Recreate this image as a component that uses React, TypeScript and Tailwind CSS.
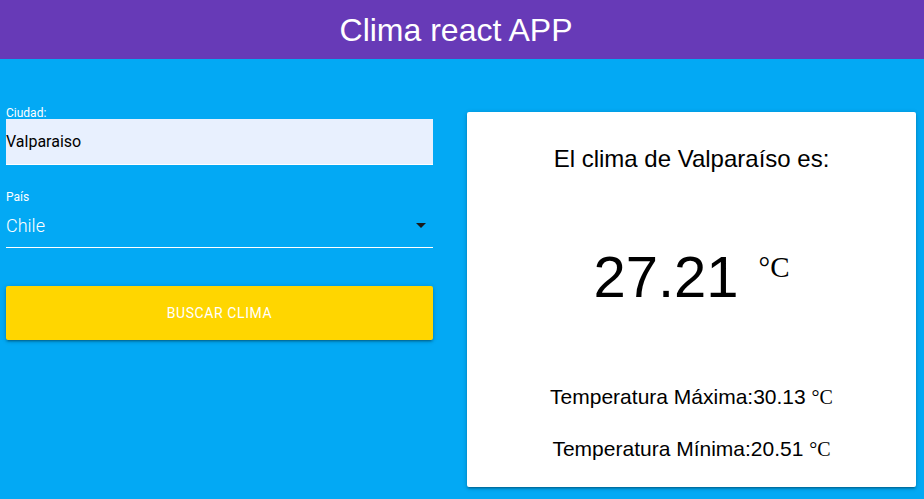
export default function App() {
  return (
    <div className="min-h-screen bg-[#03a9f4] font-['Roboto',sans-serif]">
      <header className="h-[59px] bg-[#673ab7] flex items-center justify-center pr-[12px]">
        <h1 className="text-[32px] text-white font-['Liberation_Sans',Arial,sans-serif] leading-none">
          Clima react APP
        </h1>
      </header>

      <main className="flex px-[6px]">
        {/* formulario */}
        <form className="w-[427px] pt-[48px] flex flex-col">
          <label className="text-[12px] leading-[12px] text-white">Ciudad:</label>
          <input
            defaultValue="Valparaiso"
            className="h-[46px] bg-[#e8f0fe] border-b border-white text-[16px] text-black outline-none"
          />

          <label className="mt-[26px] text-[12px] leading-[12px] text-white">País</label>
          <div className="h-[45px] flex items-center justify-between border-b border-white">
            <span className="text-[18px] font-light text-white">Chile</span>
            <span className="mr-[7px] w-0 h-0 border-l-[5px] border-r-[5px] border-t-[5px] border-l-transparent border-r-transparent border-t-[#1a1a1a]" />
          </div>

          <button
            type="button"
            className="mt-[38px] h-[54px] bg-[#ffd600] rounded-[2px] text-white text-[14px] tracking-[0.6px] shadow-[0_2px_2px_0_rgba(0,0,0,0.14),0_3px_1px_-2px_rgba(0,0,0,0.12),0_1px_5px_0_rgba(0,0,0,0.2)]"
          >
            BUSCAR CLIMA
          </button>
        </form>

        {/* resultado */}
        <section className="ml-[34px] mt-[53px] w-[449px] h-[375px] bg-white rounded-[2px] shadow-[0_2px_2px_0_rgba(0,0,0,0.14),0_3px_1px_-2px_rgba(0,0,0,0.12),0_1px_5px_0_rgba(0,0,0,0.2)] flex flex-col items-center pt-[35px] text-black font-['Liberation_Sans',Arial,sans-serif]">
          <h2 className="text-[24px] leading-none">El clima de Valparaíso es:</h2>

          <div className="mt-[77px] flex items-start">
            <span className="text-[58px] leading-none">27.21</span>
            <span className="ml-[20px] mt-[5px] text-[29px] leading-none font-['Liberation_Serif',serif]">°C</span>
          </div>

          <p className="mt-[80px] text-[21px] leading-none">
            Temperatura Máxima:30.13 <span className="text-[20px] font-['Liberation_Serif',serif]">°C</span>
          </p>
          <p className="mt-[31px] text-[21px] leading-none">
            Temperatura Mínima:20.51 <span className="text-[20px] font-['Liberation_Serif',serif]">°C</span>
          </p>
        </section>
      </main>
    </div>
  );
}
